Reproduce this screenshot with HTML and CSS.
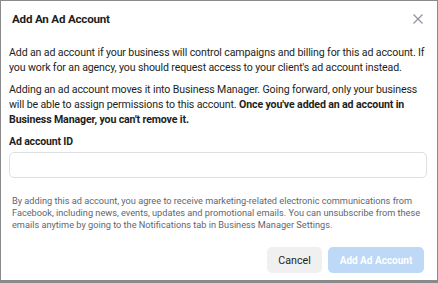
FILE: index.html
```html
<!DOCTYPE html>
<html lang="en">
<head>
    <meta charset="UTF-8">
    <title>Add An Ad Account</title>
    <link rel="stylesheet" href="styles.css">
</head>
<body>
    <div class="dialog">
        <div class="dialog-header">
            <h2>Add An Ad Account</h2>
            <button class="close" aria-label="Close">
                <svg width="10" height="10" viewBox="0 0 10 10"><path d="M0.5 0.5L9.5 9.5M9.5 0.5L0.5 9.5" stroke="#8d949e" stroke-width="1.2" fill="none"/></svg>
            </button>
        </div>
        <div class="dialog-body">
            <p>Add an ad account if your business will control campaigns and billing for this ad account. If you work for an agency, you should request access to your client's ad account instead.</p>
            <p>Adding an ad account moves it into Business Manager. Going forward, only your business will be able to assign permissions to this account. <strong>Once you've added an ad account in Business Manager, you can't remove it.</strong></p>
            <label for="adAccountId">Ad account ID</label>
            <input type="text" id="adAccountId">
            <p class="note">By adding this ad account, you agree to receive marketing-related electronic communications from Facebook, including news, events, updates and promotional emails. You can unsubscribe from these emails anytime by going to the Notifications tab in Business Manager Settings.</p>
        </div>
        <div class="dialog-footer">
            <button class="btn btn-cancel">Cancel</button>
            <button class="btn btn-primary" disabled>Add Ad Account</button>
        </div>
    </div>
</body>
</html>
```

FILE: styles.css
```css
body {
    margin: 0;
    font-family: Roboto, "Liberation Sans", Arial, sans-serif;
    color: #1c1e21;
    background-color: #8a8a8a;
}
.dialog {
    width: 436px;
    height: 279px;
    margin: 1px 1px 3px 1px;
    background-color: #fff;
    display: flex;
    flex-direction: column;
}
.dialog > * {
    flex-shrink: 0;
}
.dialog-header {
    display: flex;
    align-items: center;
    justify-content: space-between;
    height: 35px;
    padding: 0 14px 0 11px;
}
.dialog-header h2 {
    margin: 0;
    font-size: 11.6px;
    font-weight: bold;
    letter-spacing: -0.2px;
}
.close {
    background: none;
    border: none;
    padding: 0;
    width: 10px;
    height: 10px;
    display: flex;
}
.dialog-body {
    padding: 9px 10px 0 8px;
}
.dialog-body p {
    margin: 0 0 7px;
    font-size: 10.6px;
    line-height: 15px;
    letter-spacing: -0.13px;
}
.dialog-body label {
    display: block;
    font-size: 10.5px;
    font-weight: bold;
    line-height: 15px;
    letter-spacing: -0.15px;
}
.dialog-body input {
    display: block;
    box-sizing: border-box;
    width: 418px;
    height: 26px;
    margin-top: 3px;
    border: 1px solid #dddfe2;
    border-radius: 5px;
}
.dialog-body .note {
    margin: 17px 0 0 3px;
    font-size: 9.2px;
    line-height: 12px;
    letter-spacing: 0;
    color: #606770;
}
.dialog-footer {
    display: flex;
    justify-content: flex-end;
    gap: 6px;
    padding-right: 13px;
    margin-top: auto;
    margin-bottom: 7px;
}
.btn {
    height: 26px;
    border: none;
    border-radius: 5px;
    font-family: inherit;
    padding: 0;
    white-space: nowrap;
}
.btn-cancel {
    width: 55px;
    background-color: #f0f0f0;
    color: #1c1e21;
    font-size: 10.7px;
}
.btn-primary {
    width: 96px;
    background-color: #bed8f8;
    color: #fff;
    font-size: 10px;
    font-weight: bold;
}
```
